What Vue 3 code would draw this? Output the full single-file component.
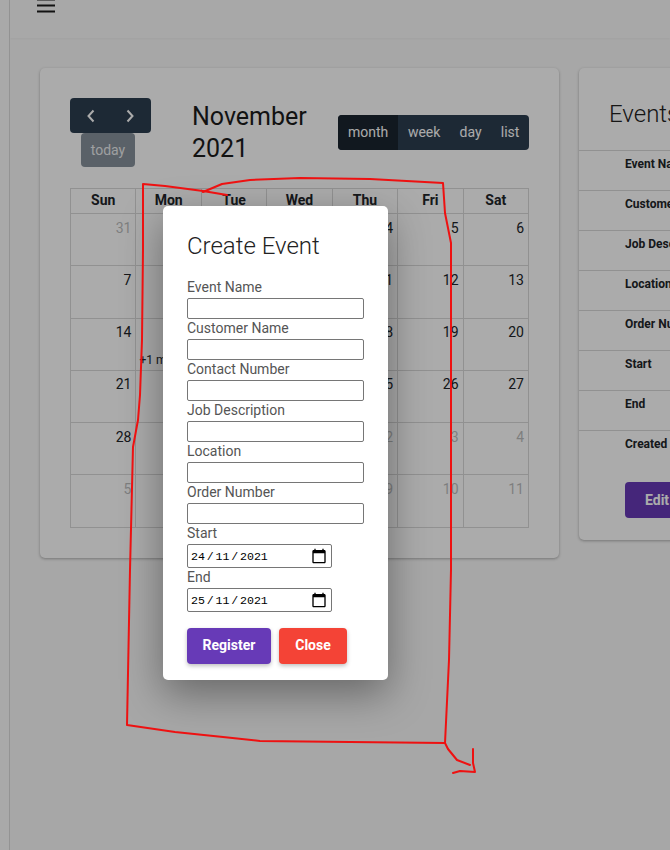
<template>
  <div class="page">
    <aside class="side"></aside>
    <div class="main">
      <header class="topbar">
        <svg class="burger" width="18" height="14" viewBox="0 0 18 14">
          <path d="M0 .5H18M0 6.5H18M0 12.5H18" stroke="#1c1c1c" stroke-width="2" fill="none" />
        </svg>
      </header>
      <div class="content">
        <section class="card calendar-card">
          <div class="toolbar">
            <div class="nav-col">
              <div class="nav-group">
                <svg width="12" height="16" viewBox="0 0 12 16"><path d="M8.5 2.5 3.5 8l5 5.5" /></svg>
                <svg width="12" height="16" viewBox="0 0 12 16"><path d="M3.5 2.5 8.5 8l-5 5.5" /></svg>
              </div>
              <button class="today">today</button>
            </div>
            <h2 class="month-title">November 2021</h2>
            <div class="views">
              <span v-for="v in views" :key="v" class="view" :class="{ active: v === 'month' }">{{ v }}</span>
            </div>
          </div>
          <div class="grid">
            <div v-for="d in weekDays" :key="d" class="head-cell">{{ d }}</div>
            <div v-for="(c, i) in cells" :key="i" class="day-cell" :class="{ other: c.other }">
              <span class="num">{{ c.n }}</span>
              <span v-if="c.more" class="more">+1 more</span>
            </div>
          </div>
        </section>
        <section class="card events-card">
          <h3 class="events-title">Events</h3>
          <div v-for="r in eventRows" :key="r" class="event-row">{{ r }}</div>
          <button class="edit-btn">Edit</button>
        </section>
      </div>
    </div>

    <div class="overlay">
      <div class="modal">
        <h2 class="modal-title">Create Event</h2>
        <template v-for="f in fields" :key="f">
          <label class="lbl">{{ f }}</label>
          <input class="txt" type="text" />
        </template>
        <template v-for="d in dates" :key="d.label">
          <label class="lbl">{{ d.label }}</label>
          <div class="date-field">
            <span class="date-text">{{ d.dd }}<i>/</i>11<i>/</i>2021</span>
            <svg width="16" height="16" viewBox="0 0 24 24">
              <path d="M20 3h-1V1h-2v2H7V1H5v2H4c-1.1 0-2 .9-2 2v16c0 1.1.9 2 2 2h16c1.1 0 2-.9 2-2V5c0-1.1-.9-2-2-2zm0 18H4V8h16v13z" />
            </svg>
          </div>
        </template>
        <div class="actions">
          <button class="btn register">Register</button>
          <button class="btn close">Close</button>
        </div>
      </div>
    </div>

    <!-- red marker drawn on top of the screenshot -->
    <svg class="scribble" width="670" height="850" viewBox="0 0 670 850">
      <path d="M227 195 203 191 165 186 143 184 143 250 142 340 140 395 138 420 133 447 130 570 127 725 175 732 223 737 260 741 350 742 445 743 448 749 457 760 470 765" />
      <path d="M203 192 222 184 250 180 300 178 370 179 443 183 445 213 451 243 451 340 451 570 449 660 445 743" />
      <path d="M473 749 473 763 475 772 460 771 453 773" />
    </svg>
  </div>
</template>

<script setup>
const views = ['month', 'week', 'day', 'list']
const weekDays = ['Sun', 'Mon', 'Tue', 'Wed', 'Thu', 'Fri', 'Sat']
const eventRows = ['Event Name', 'Customer Name', 'Job Description', 'Location', 'Order Number', 'Start', 'End', 'Created']
const fields = ['Event Name', 'Customer Name', 'Contact Number', 'Job Description', 'Location', 'Order Number']
const dates = [
  { label: 'Start', dd: '24' },
  { label: 'End', dd: '25' }
]

// 31 Oct 2021 .. 11 Dec 2021
const cells = []
for (let i = 0; i < 42; i++) {
  let n = i
  let other = false
  if (i === 0) {
    n = 31
    other = true
  } else if (i > 30) {
    n = i - 30
    other = true
  }
  cells.push({ n, other, more: i === 15 })
}
</script>

<style>
html, body {
  margin: 0;
  overflow: hidden;
}
</style>

<style scoped>
.page {
  position: relative;
  width: 670px;
  height: 850px;
  overflow: hidden;
  display: flex;
  background: #f9f9f9;
  font-family: Roboto, "Liberation Sans", sans-serif;
  color: #212529;
}

.side {
  flex: 0 0 9px;
  background: #fdfdfd;
  border-right: 1px solid #dcdcdc;
}

.main {
  flex: 0 0 660px;
  min-width: 0;
}

.topbar {
  display: flow-root;
  height: 38px;
  background: #fbfbfb;
  box-shadow: 0 1px 2px rgba(0, 0, 0, 0.03);
  padding-left: 27px;
  box-sizing: border-box;
  overflow: hidden;
}

.burger {
  display: block;
  margin-top: -1px;
}

.content {
  display: flex;
  gap: 20px;
  padding: 30px 0 0 30px;
  width: 900px;
}

.card {
  background: #fff;
  border-radius: 5px;
  box-shadow: 0 1px 3px rgba(0, 0, 0, 0.3);
  box-sizing: border-box;
}

.calendar-card {
  width: 519px;
  height: 490px;
  padding: 30px;
}

.toolbar {
  display: flex;
  align-items: center;
  height: 69px;
  margin-bottom: 21px;
}

.nav-col {
  width: 81px;
  display: flex;
  flex-direction: column;
  align-items: flex-start;
}

.nav-group {
  width: 81px;
  height: 35px;
  display: flex;
  align-items: center;
  justify-content: space-between;
  padding: 0 15px;
  box-sizing: border-box;
  background: #2c3e50;
  border-radius: 4px;
}

.nav-group svg {
  fill: none;
  stroke: #fff;
  stroke-width: 2;
}

.today {
  width: 54px;
  height: 34px;
  margin-left: 11px;
  padding: 0;
  border: 0;
  border-radius: 4px;
  background: #86919b;
  color: #eceef0;
  font: 400 14px Roboto, sans-serif;
}

.month-title {
  width: 130px;
  margin: 0 0 0 41px;
  font-size: 25px;
  line-height: 32px;
  font-weight: 400;
  color: #1c1c1c;
}

.views {
  margin-left: auto;
  display: flex;
  height: 35px;
  background: #2c3e50;
  border-radius: 4px;
  overflow: hidden;
}

.view {
  padding: 0 9.6px;
  line-height: 35px;
  font-size: 14px;
  color: #fff;
}

.view.active {
  padding: 0 10px;
  background: #1a252f;
}

.grid {
  display: grid;
  grid-template-columns: repeat(7, 1fr);
  grid-template-rows: 25px repeat(6, 52.3px);
  width: 459px;
  border-top: 1px solid #d8d8d8;
  border-left: 1px solid #d8d8d8;
  box-sizing: border-box;
}

.head-cell {
  border-right: 1px solid #d8d8d8;
  border-bottom: 1px solid #d8d8d8;
  text-align: center;
  font-size: 14px;
  font-weight: 700;
  line-height: 23px;
}

.day-cell {
  position: relative;
  border-right: 1px solid #d8d8d8;
  border-bottom: 1px solid #d8d8d8;
  padding: 5.5px 4px 0;
  text-align: right;
  font-size: 14px;
  line-height: 16px;
}

.day-cell.other .num {
  opacity: 0.3;
}

.more {
  position: absolute;
  left: 3px;
  top: 33px;
  font-size: 12px;
  white-space: nowrap;
}

.events-card {
  width: 300px;
  height: 472px;
  flex: none;
}

.events-title {
  margin: 0;
  height: 82px;
  padding: 30px 0 0 30px;
  box-sizing: border-box;
  font-size: 24px;
  line-height: 32px;
  font-weight: 300;
  color: #222;
}

.event-row {
  height: 40px;
  box-sizing: border-box;
  border-top: 1px solid #d8d8d8;
  padding: 6px 0 0 46px;
  font-size: 12px;
  line-height: 14px;
  font-weight: 700;
}

.edit-btn {
  display: block;
  margin: 12px 0 0 46px;
  width: 90px;
  height: 36px;
  padding: 0 20px;
  text-align: left;
  border: 0;
  border-radius: 4px;
  background: #673ab7;
  color: #fff;
  font: 700 14px Roboto, sans-serif;
}

.overlay {
  position: absolute;
  inset: 0;
  background: rgba(0, 0, 0, 0.33);
}

.modal {
  position: absolute;
  left: 163px;
  top: 206px;
  width: 225px;
  box-sizing: border-box;
  padding: 24px 24px 16px;
  display: flex;
  flex-direction: column;
  align-items: flex-start;
  background: #fff;
  border-radius: 5px;
  box-shadow: 0 14px 40px rgba(0, 0, 0, 0.38);
}

.modal-title {
  margin: 0 0 16px;
  font-size: 24px;
  line-height: 32px;
  font-weight: 300;
  color: #222;
}

.lbl {
  display: block;
  font-size: 14px;
  line-height: 18px;
  padding-bottom: 2px;
  color: #555;
}

.txt {
  display: block;
  flex: none;
  width: 177px;
  height: 21px;
  margin: 0;
  padding: 0 2px;
  box-sizing: border-box;
  background: #fff;
  border: 1px solid #767676;
  border-radius: 2px;
  outline: none;
}

.date-field {
  flex: none;
  width: 145px;
  height: 24px;
  box-sizing: border-box;
  display: flex;
  align-items: center;
  justify-content: space-between;
  padding: 0 4px 0 3px;
  border: 1px solid #767676;
  border-radius: 2px;
}

.date-text {
  font-family: "Liberation Mono", monospace;
  font-size: 11.6px;
  color: #000;
}

.date-text i {
  font-style: normal;
  margin: 0 1.8px;
}

.actions {
  display: flex;
  gap: 8px;
  margin-top: 16px;
}

.btn {
  height: 36px;
  padding: 0 0 2px;
  border: 0;
  border-radius: 4px;
  color: #fff;
  font: 700 14px Roboto, sans-serif;
  box-shadow: 0 2px 4px rgba(0, 0, 0, 0.25);
}

.register {
  width: 84px;
  background: #673ab7;
}

.close {
  width: 68px;
  background: #f44336;
}

.scribble {
  position: absolute;
  left: 0;
  top: 0;
  pointer-events: none;
}

.scribble path {
  fill: none;
  stroke: #ee1111;
  stroke-width: 2;
  stroke-linejoin: round;
  stroke-linecap: round;
}
</style>
